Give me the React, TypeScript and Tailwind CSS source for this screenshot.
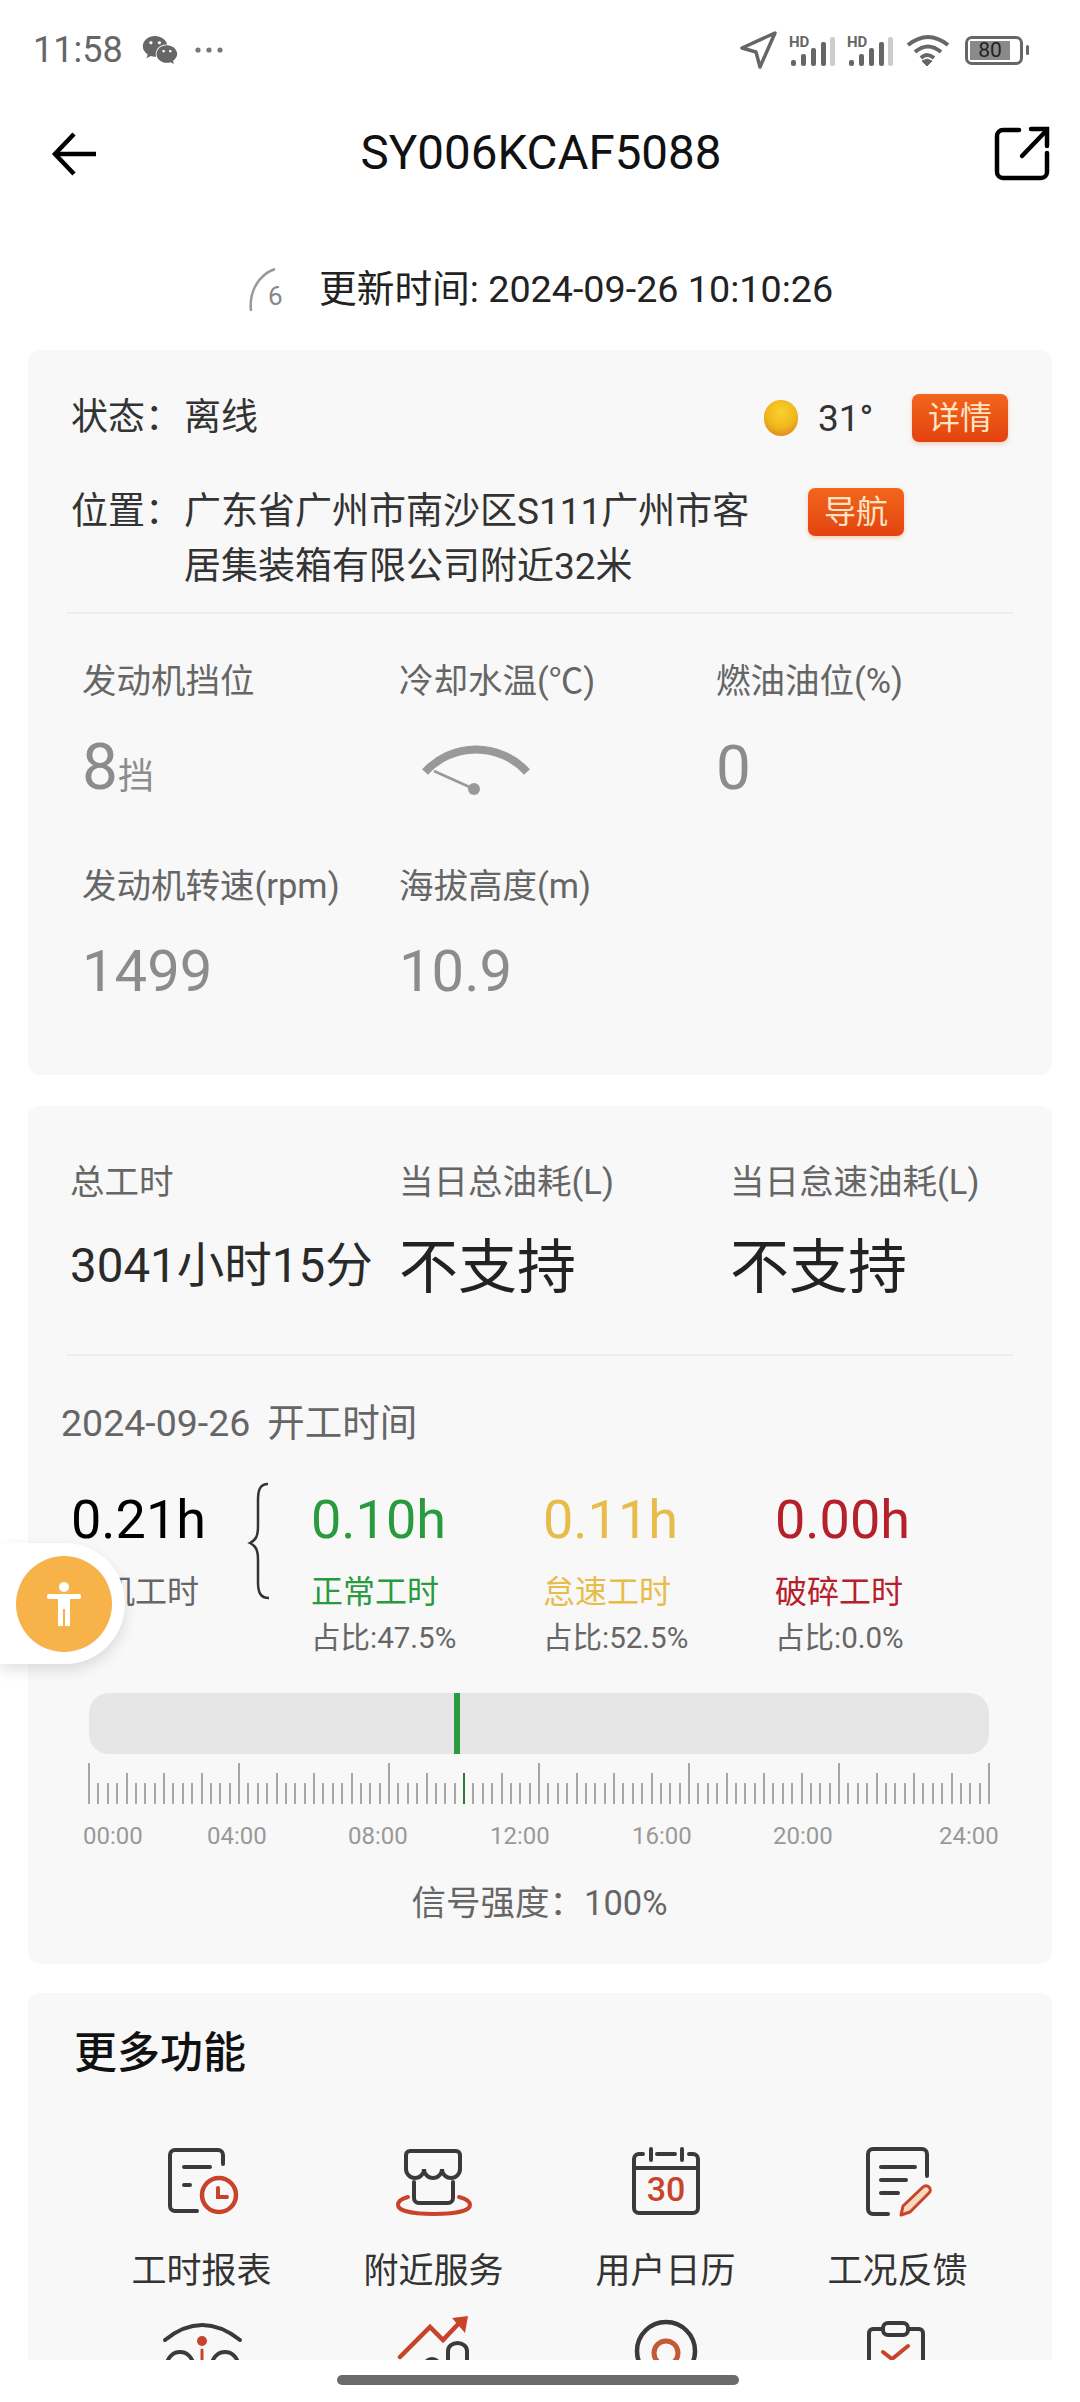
import React from 'react';
import { FaWeixin } from 'react-icons/fa';

const DARK = '#3a3a3a';
const RED = '#c8432a';

const HdSignal = () => (
    <svg width="48" height="36" viewBox="0 -4 48 36">
        <text x="0" y="11" fontSize="15" fontWeight="700" fill="#666" fontFamily="Roboto">HD</text>
        <rect x="2" y="24" width="5" height="6" rx="2" fill="#666" />
        <rect x="12" y="18" width="5" height="12" rx="2" fill="#666" />
        <rect x="22" y="12" width="5" height="18" rx="2" fill="#666" />
        <rect x="32" y="6" width="5" height="24" rx="2" fill="#666" />
        <rect x="41" y="1" width="5" height="29" rx="2" fill="#ccc" />
    </svg>
);

const StatusBar = () => (
    <div className="flex h-[100px] items-center pl-[33px] text-[#666]">
        <span className="w-[109px] text-[36px] leading-none">11:58</span>
        <FaWeixin className="h-[34px] w-[36px] text-[#666]" />
        <svg className="ml-[16px]" width="30" height="8" viewBox="0 0 30 8" fill="#777">
            <circle cx="4" cy="4" r="2.6" />
            <circle cx="15" cy="4" r="2.6" />
            <circle cx="26" cy="4" r="2.6" />
        </svg>
        <svg className="ml-[513px]" width="42" height="40" viewBox="0 0 42 40" fill="none" stroke="#666" strokeWidth="3.5" strokeLinejoin="round">
            <path d="M38 3L5 18L19 22L23 37Z" />
        </svg>
        <div className="ml-[10px]"><HdSignal /></div>
        <div className="ml-[10px]"><HdSignal /></div>
        <svg className="ml-[11px]" width="44" height="34" viewBox="0 0 44 34" fill="none" stroke="#666" strokeWidth="4">
            <path d="M2 12Q22 -4 42 12" />
            <path d="M9 19Q22 8 35 19" />
            <path d="M15 25Q21 19 28 25" />
            <path d="M16 28L21 33L26 28L21 26Z" fill="#666" strokeWidth="1" />
        </svg>
        <div className="ml-[15px] flex h-[29px] w-[58px] items-center rounded-[7px] border-[3px] border-[#666] p-[2px]">
            <div className="flex h-full w-[40px] items-center justify-center bg-[#8a8a8a] text-[21px] leading-none text-[#222]">80</div>
        </div>
        <div className="ml-[3px] h-[10px] w-[3px] rounded-sm bg-[#666]" />
    </div>
);

const NavBar = () => (
    <div className="flex h-[110px] items-center pb-[3px] pl-[50px] pr-[28px]">
        <svg width="50" height="46" viewBox="0 0 50 46" fill="none" stroke="#000" strokeWidth="4.5">
            <path d="M46 23H6" />
            <path d="M24 3L5 23L24 43" />
        </svg>
        <h1 className="flex-1 pr-[10px] text-center text-[47.5px] font-normal leading-none text-[#111]">SY006KCAF5088</h1>
        <svg width="60" height="58" viewBox="0 0 60 58" fill="none" stroke="#000" strokeWidth="4.5" strokeLinecap="round">
            <path d="M27 5H11a6 6 0 0 0-6 6V47a6 6 0 0 0 6 6H49a6 6 0 0 0 6-6V28" />
            <path d="M30 31L54 6" />
            <path d="M39 4H55V21" />
        </svg>
    </div>
);

const UpdateRow = () => (
    <div className="flex h-[140px] items-center pl-[248px] pt-[20px]">
        <svg width="40" height="46" viewBox="0 0 40 46" fill="none">
            <path d="M27 2C10 8 1 25 3 44" stroke="#999" strokeWidth="2.5" />
            <text x="20" y="38" fontSize="26" fill="#888" fontFamily="Roboto">6</text>
        </svg>
        <span className="ml-[31px] text-[37.7px] leading-none text-[#222]">更新时间: 2024-09-26 10:10:26</span>
    </div>
);

const OrangeBtn = ({ children }: { children: React.ReactNode }) => (
    <div className="flex h-[48px] w-[96px] items-center justify-center rounded-[7px] bg-gradient-to-b from-[#f2661c] to-[#e2420f] text-[32px] leading-none text-[#ffe3c4] shadow-[0_2px_4px_rgba(240,120,60,0.35)]">
        {children}
    </div>
);

const StatLabel = ({ children }: { children: React.ReactNode }) => (
    <div className="h-[40px] text-[34.5px] leading-[40px] text-[#666]">{children}</div>
);

const StatValue = ({ children, className }: { children: React.ReactNode; className: string }) => (
    <div className={`flex h-[60px] items-center text-[58px] leading-none text-[#8c8c8c] ${className}`}>{children}</div>
);

const StatusCard = () => (
    <section className="mx-[28px] h-[725px] rounded-xl bg-[#f8f8f8] pt-[44px]">
        <div className="flex h-[48px] items-center justify-between pl-[43px] pr-[44px] text-[37px] text-[#333]">
            <div className="flex">
                <span className="w-[113px]">状态：</span>
                <span>离线</span>
            </div>
            <div className="flex items-center">
                <div className="h-[36px] w-[34px] rounded-full bg-[radial-gradient(circle_at_50%_35%,#f8d22c_0%,#f0b81e_50%,#d9751a_100%)]" />
                <span className="ml-[20px] w-[57px] text-[37px] leading-none">31°</span>
                <div className="ml-[37px]"><OrangeBtn>详情</OrangeBtn></div>
            </div>
        </div>
        <div className="mt-[42px] flex pl-[43px] text-[37px] leading-[55px] text-[#333]">
            <span className="w-[113px]">位置：</span>
            <p className="w-[624px]">广东省广州市南沙区S111广州市客<br />居集装箱有限公司附近32米</p>
            <div className="mt-[4px]"><OrangeBtn>导航</OrangeBtn></div>
        </div>
        <div className="mx-[38px] mt-[18px] h-[2px] bg-[#eeeeee]" />
        <div className="mt-[47px] grid grid-cols-[317px_317px_1fr] pl-[54px]">
            <div>
                <StatLabel>发动机挡位</StatLabel>
                <StatValue className="mt-[37px]"><span className="text-[64px]">8</span><span className="mt-[18px] text-[36px]">挡</span></StatValue>
            </div>
            <div>
                <StatLabel>冷却水温(℃)</StatLabel>
                <div className="mt-[42px] pl-[21px]">
                    <svg width="112" height="54" viewBox="0 0 112 54" fill="none">
                        <path d="M5 29A69 69 0 0 1 107 29" stroke="#999" strokeWidth="8" />
                        <path d="M14 28L54 46" stroke="#999" strokeWidth="2.5" />
                        <circle cx="54" cy="46" r="6" fill="#999" />
                    </svg>
                </div>
            </div>
            <div>
                <StatLabel>燃油油位(%)</StatLabel>
                <StatValue className="mt-[37px] text-[62px]">0</StatValue>
            </div>
            <div className="mt-[68px]">
                <StatLabel>发动机转速(rpm)</StatLabel>
                <StatValue className="mt-[35px]">1499</StatValue>
            </div>
            <div className="mt-[68px]">
                <StatLabel>海拔高度(m)</StatLabel>
                <StatValue className="mt-[35px]">10.9</StatValue>
            </div>
        </div>
    </section>
);

const BREAKDOWN = [
    { value: '0.10h', label: '正常工时', share: '占比:47.5%', color: 'text-[#2a9a3f]' },
    { value: '0.11h', label: '怠速工时', share: '占比:52.5%', color: 'text-[#e8bc4a]' },
    { value: '0.00h', label: '破碎工时', share: '占比:0.0%', color: 'text-[#b5202a]' },
];

const TIME_LABELS = [
    { text: '00:00', className: 'ml-0' },
    { text: '04:00', className: 'ml-[65px]' },
    { text: '08:00', className: 'ml-[82px]' },
    { text: '12:00', className: 'ml-[83px]' },
    { text: '16:00', className: 'ml-[83px]' },
    { text: '20:00', className: 'ml-[82px]' },
    { text: '24:00', className: 'ml-[107px]' },
];

const Ruler = () => (
    <div className="ml-[60px] mt-[9px] flex h-[41px] w-[902px] items-end justify-between">
        {Array.from({ length: 97 }, (_, i) => {
            const height = i % 16 === 0 ? 'h-[41px]' : i % 4 === 0 ? 'h-[31px]' : 'h-[21px]';
            return <div key={i} className={`w-[2px] ${height} ${i === 40 ? 'bg-[#2b7a3c]' : 'bg-[#a6a6a6]'}`} />;
        })}
    </div>
);

const WorkCard = () => (
    <section className="mx-[28px] mt-[31px] h-[858px] rounded-xl bg-[#f8f8f8] pt-[56px]">
        <div className="grid grid-cols-[329px_331px_1fr] pl-[42px]">
            <div>
                <StatLabel>总工时</StatLabel>
                <div className="mt-[30px] flex h-[70px] items-center text-[47.5px] leading-none text-[#2a2a2a]">3041小时15分</div>
            </div>
            <div>
                <StatLabel>当日总油耗(L)</StatLabel>
                <div className="mt-[30px] flex h-[70px] items-center text-[59px] leading-none text-[#222]">不支持</div>
            </div>
            <div>
                <StatLabel>当日怠速油耗(L)</StatLabel>
                <div className="mt-[30px] flex h-[70px] items-center text-[59px] leading-none text-[#222]">不支持</div>
            </div>
        </div>
        <div className="mx-[38px] mt-[52px] h-[2px] bg-[#eeeeee]" />
        <div className="mt-[47px] flex h-[40px] pl-[33px] text-[37.5px] leading-[40px] text-[#666]">
            <span>2024-09-26</span>
            <span className="ml-[17px]">开工时间</span>
        </div>
        <div className="mt-[47px] flex pl-[43px]">
            <div className="w-[176px]">
                <div className="h-[60px] text-[54px] leading-[60px] text-black">0.21h</div>
                <div className="mt-[22px] h-[40px] text-[32px] leading-[40px] text-[#666]">开机工时</div>
            </div>
            <svg className="-mt-[8px]" width="24" height="118" viewBox="0 0 24 118" fill="none" stroke="#333" strokeWidth="2.5">
                <path d="M21 2C13 2 11 8 11 18V44C11 54 9 58 3 61C9 64 11 68 11 78V100C11 110 13 116 22 116" />
            </svg>
            <div className="ml-[40px] flex">
                {BREAKDOWN.map(item => (
                    <div key={item.label} className="w-[232px]">
                        <div className={`h-[60px] text-[54px] leading-[60px] ${item.color}`}>{item.value}</div>
                        <div className={`mt-[22px] h-[40px] text-[32px] leading-[40px] ${item.color}`}>{item.label}</div>
                        <div className="mt-[8px] h-[36px] text-[29.5px] leading-[36px] text-[#666]">{item.share}</div>
                    </div>
                ))}
            </div>
        </div>
        <div className="ml-[61px] mt-[37px] flex h-[61px] w-[900px] rounded-[20px] bg-[#e6e6e6]">
            <div className="ml-[365px] h-full w-[6px] bg-[#2a9a3f]" />
        </div>
        <Ruler />
        <div className="ml-[55px] mt-[17px] flex h-[30px] items-center text-[24px] leading-none text-[#999]">
            {TIME_LABELS.map(l => (
                <span key={l.text} className={`w-[59px] ${l.className}`}>{l.text}</span>
            ))}
        </div>
        <div className="mt-[32px] h-[40px] pr-[1px] text-center text-[34.5px] leading-[40px] text-[#666]">信号强度：100%</div>
    </section>
);

const stroke = { fill: 'none', stroke: DARK, strokeWidth: 4, strokeLinecap: 'round' as const };
const redStroke = { fill: 'none', stroke: RED, strokeWidth: 4, strokeLinecap: 'round' as const };

const IconFrame = ({ children }: { children: React.ReactNode }) => (
    <svg width="80" height="80" viewBox="0 0 80 80" className="overflow-visible">{children}</svg>
);

const MORE_TOP = [
    {
        label: '工时报表',
        icon: (
            <IconFrame>
                <path d="M59 21V12a5 5 0 0 0-5-5H11a5 5 0 0 0-5 5V63a5 5 0 0 0 5 5H33" {...stroke} />
                <path d="M20 24H46M20 42H26" {...stroke} />
                <circle cx="55" cy="52" r="17" {...redStroke} strokeWidth={4.5} />
                <path d="M54 45V54H63" {...redStroke} />
            </IconFrame>
        ),
    },
    {
        label: '附近服务',
        icon: (
            <IconFrame>
                <path d="M13 8H60a4 4 0 0 1 4 4V26a9 9 0 0 1-18 0a9 9 0 0 1-18 0a9 9 0 0 1-18 0V12a4 4 0 0 1 4-4Z" {...stroke} />
                <path d="M18 39V55a5 5 0 0 0 5 5H52a5 5 0 0 0 5-5V39" {...stroke} />
                <path d="M12 54C4 56 2 59 2 62C2 68 18 71 38 71S74 68 74 62C74 59 71 56 63 54" {...redStroke} />
            </IconFrame>
        ),
    },
    {
        label: '用户日历',
        icon: (
            <IconFrame>
                <path d="M15 11H11a5 5 0 0 0-5 5V65a5 5 0 0 0 5 5H65a5 5 0 0 0 5-5V16a5 5 0 0 0-5-5H61" {...stroke} />
                <path d="M29 11H47M6 25H70M23 6V17M54 6V17" {...stroke} />
                <text x="38" y="58" textAnchor="middle" fontSize="34" fontWeight="500" fill={RED} fontFamily="Roboto">30</text>
            </IconFrame>
        ),
    },
    {
        label: '工况反馈',
        icon: (
            <IconFrame>
                <path d="M67 33V11a5 5 0 0 0-5-5H13a5 5 0 0 0-5 5V66a5 5 0 0 0 5 5H28" {...stroke} />
                <path d="M21 24H55M21 37H46M21 50H38" {...stroke} />
                <path d="M63 44a4 4 0 0 1 6 6L50 69L41 72L43 63Z" fill="#f6d8c0" stroke={RED} strokeWidth="3" strokeLinejoin="round" />
            </IconFrame>
        ),
    },
];

const MORE_BOTTOM = [
    <IconFrame key="a">
        <path d="M1 27Q38 -3 76 27" {...stroke} />
        <circle cx="38" cy="28" r="5" fill={RED} />
        <path d="M38 37V50" {...redStroke} strokeWidth={3} />
        <circle cx="16" cy="52" r="13" {...stroke} />
        <circle cx="61" cy="52" r="13" {...stroke} />
    </IconFrame>,
    <IconFrame key="b">
        <path d="M4 44L34 14L47 27L66 7" {...redStroke} strokeWidth={4.5} />
        <path d="M56 5L72 3L69 20Z" fill={RED} />
        <path d="M52 50V38a9.5 8 0 0 1 19 0V50" {...stroke} />
        <circle cx="36" cy="54" r="10" fill={DARK} />
    </IconFrame>,
    <IconFrame key="c">
        <circle cx="38" cy="38" r="29" {...stroke} strokeWidth={4.5} />
        <circle cx="38" cy="40" r="12" fill="none" stroke="#c25a35" strokeWidth="5" />
    </IconFrame>,
    <IconFrame key="d">
        <path d="M23 16H13a4 4 0 0 0-4 4V60M48 16H59a4 4 0 0 1 4 4V60" {...stroke} />
        <rect x="23" y="10" width="25" height="12" rx="5" {...stroke} />
        <path d="M23 39L32 46L48 33" {...redStroke} />
    </IconFrame>,
];

const MoreCard = () => (
    <section className="mx-[28px] mt-[29px] rounded-t-xl bg-[#f8f8f8] pt-[32px]">
        <h2 className="h-[56px] pl-[46px] text-[43px] font-medium leading-[56px] text-[#111]">更多功能</h2>
        <div className="mt-[62px] grid grid-cols-[232px_232px_232px_232px] pl-[60px]">
            {MORE_TOP.map(item => (
                <div key={item.label} className="flex flex-col items-center">
                    <div className="h-[80px] w-[80px]">{item.icon}</div>
                    <div className="mt-[29px] h-[40px] pr-[5px] text-[35px] leading-[40px] text-[#333]">{item.label}</div>
                </div>
            ))}
            {MORE_BOTTOM.map((icon, i) => (
                <div key={i} className="mt-[21px] flex flex-col items-center">
                    <div className="h-[80px] w-[80px]">{icon}</div>
                </div>
            ))}
        </div>
    </section>
);

const FloatButton = () => (
    <div className="absolute left-0 top-[1543px] flex h-[121px] w-[125px] items-center rounded-r-[60px] bg-white pl-[16px] shadow-[0_6px_14px_rgba(0,0,0,0.12)]">
        <div className="flex h-[96px] w-[96px] items-center justify-center rounded-full bg-[#f7b24a]">
            <svg width="36" height="44" viewBox="0 0 36 44" fill="#fff">
                <circle cx="18" cy="5" r="5" />
                <rect x="1" y="12" width="34" height="5" rx="2" />
                <rect x="12" y="12" width="12" height="15" />
                <rect x="12" y="26" width="5" height="18" />
                <rect x="19" y="26" width="5" height="18" />
            </svg>
        </div>
    </div>
);

export default function App() {
    return (
        <div className="relative flex h-[2402px] w-[1080px] flex-col overflow-hidden bg-white [font-family:Roboto,'Noto_Sans_CJK_SC',sans-serif]">
            <div className="min-h-0 flex-1 overflow-hidden">
                <StatusBar />
                <NavBar />
                <UpdateRow />
                <StatusCard />
                <WorkCard />
                <MoreCard />
            </div>
            <div className="flex h-[42px] justify-center pr-[5px] pt-[15px]">
                <div className="h-[10px] w-[402px] rounded-full bg-[#6b6b6b]" />
            </div>
            <FloatButton />
        </div>
    );
}
